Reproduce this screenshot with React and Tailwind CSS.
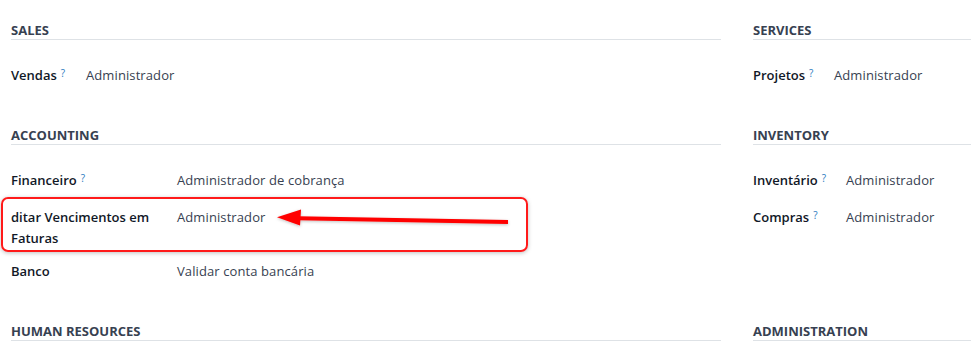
import React from "react";

const Q = () => (
  <sup className="ml-[4px] text-[10px] font-normal text-[#2b7bc0] relative top-[-3px]">?</sup>
);

function Header({ children }) {
  return (
    <div className="h-[20px] leading-[20px] border-b border-[#dee2e6] text-[13px] font-bold text-[#374151] uppercase">
      {children}
    </div>
  );
}

function Row({ label, help, value, labelW, tall }) {
  return (
    <div className={`flex items-start pt-[1px] ${tall ? "h-[54px]" : "h-[37px]"}`}>
      <div
        className="shrink-0 text-[13px] leading-[21px] font-semibold text-[#111827] pr-[8px]"
        style={{ width: labelW }}
      >
        {label}
        {help && <Q />}
      </div>
      <div className="text-[13px] leading-[21px] text-[#374151] tracking-[0.1px]">{value}</div>
    </div>
  );
}

function Section({ title, labelW, rows }) {
  return (
    <div>
      <Header>{title}</Header>
      <div className="mt-[24px]">
        {rows.map((r, i) => (
          <Row key={i} {...r} labelW={labelW} />
        ))}
      </div>
    </div>
  );
}

export default function App() {
  return (
    <div
      className="relative w-[971px] h-[348px] overflow-hidden bg-white"
      style={{ fontFamily: '"Open Sans", "Noto Sans", sans-serif' }}
    >
      <div className="grid grid-cols-[710px_710px] gap-x-[32px] gap-y-[24px] pl-[11px] pt-[20px]">
        <Section
          title="Sales"
          labelW={75}
          rows={[{ label: "Vendas", help: true, value: "Administrador" }]}
        />
        <Section
          title="Services"
          labelW={81}
          rows={[{ label: "Projetos", help: true, value: "Administrador" }]}
        />
        <Section
          title="Accounting"
          labelW={166}
          rows={[
            { label: "Financeiro", help: true, value: "Administrador de cobrança" },
            { label: "ditar Vencimentos em Faturas", value: "Administrador", tall: true },
            { label: "Banco", value: "Validar conta bancária" },
          ]}
        />
        <Section
          title="Inventory"
          labelW={93}
          rows={[
            { label: "Inventário", help: true, value: "Administrador" },
            { label: "Compras", help: true, value: "Administrador" },
          ]}
        />
        <Section title="Human Resources" labelW={100} rows={[]} />
        <Section title="Administration" labelW={100} rows={[]} />
      </div>

      <div className="absolute left-[1px] top-[197px] w-[527px] h-[55px] border-2 border-[#ff1a1a] rounded-[7px] shadow-[0_1px_4px_rgba(0,0,0,0.25)] pointer-events-none" />

      <svg
        className="absolute left-0 top-0 pointer-events-none"
        width="971"
        height="348"
        viewBox="0 0 971 348"
      >
        <defs>
          <filter id="sh" x="-10%" y="-50%" width="120%" height="200%">
            <feDropShadow dx="0" dy="1" stdDeviation="1.5" floodColor="#000" floodOpacity="0.25" />
          </filter>
        </defs>
        <g filter="url(#sh)">
          <line x1="298" y1="218.3" x2="508" y2="222" stroke="#ff0000" strokeWidth="4" />
          <polygon points="277,217.3 301,209.5 300,225.5" fill="#ff0000" />
        </g>
      </svg>
    </div>
  );
}
